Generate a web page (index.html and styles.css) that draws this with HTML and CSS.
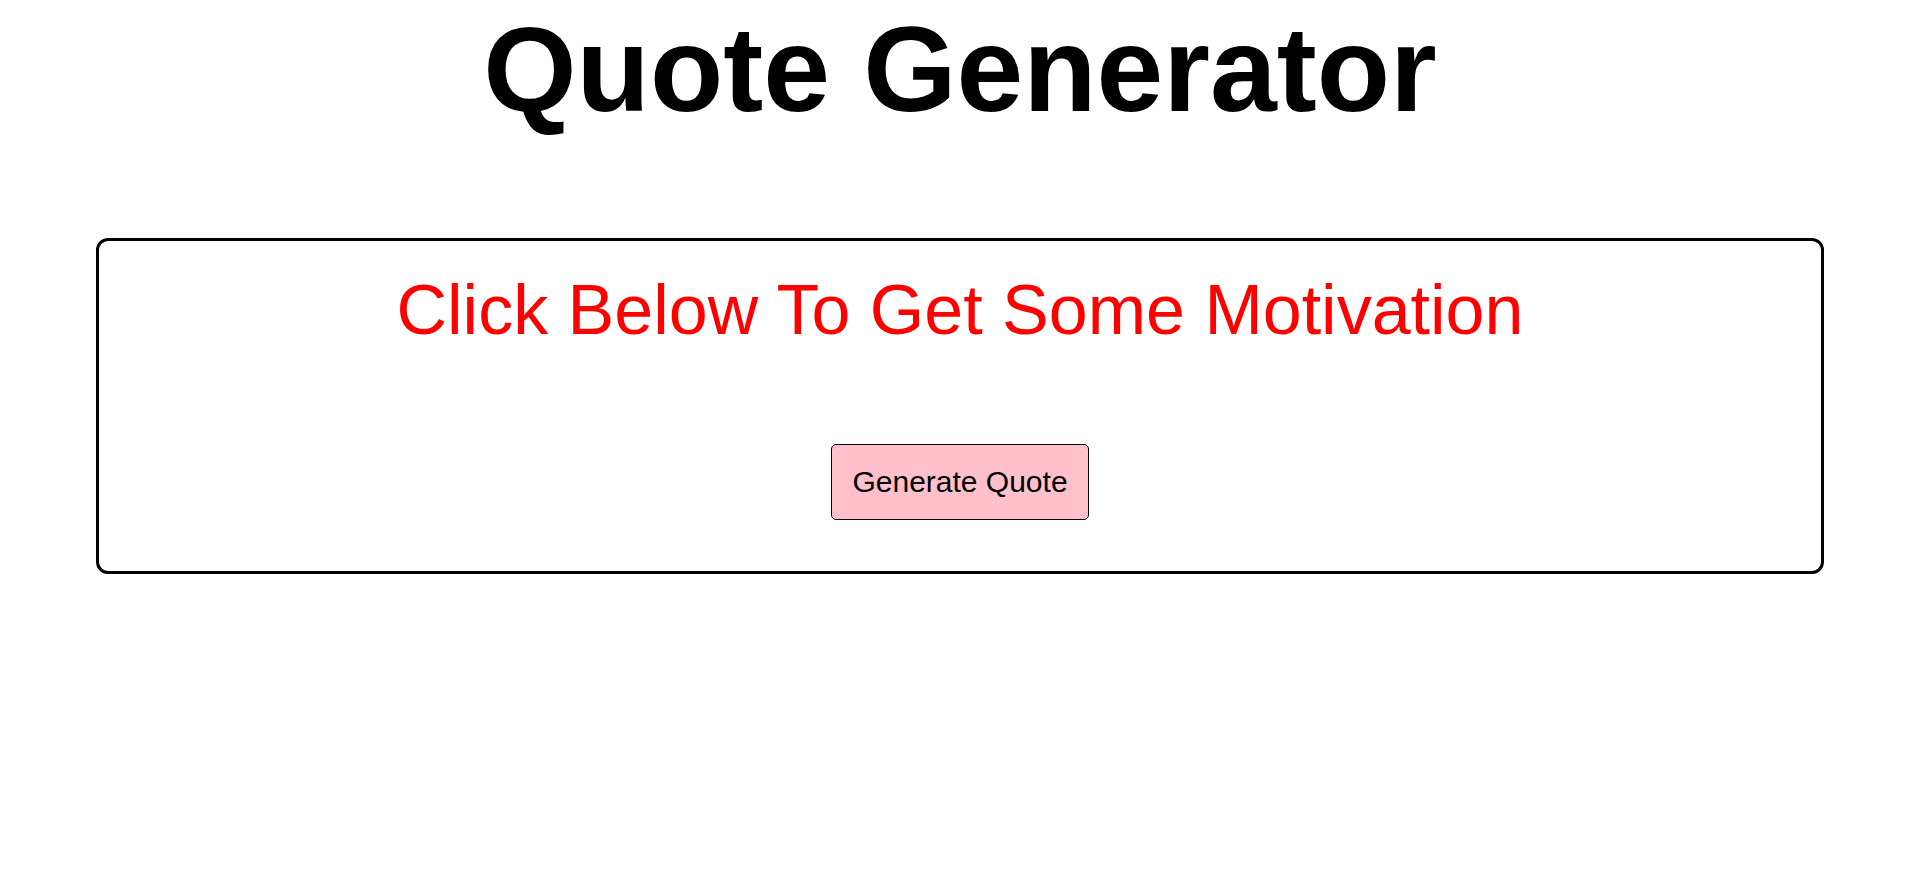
FILE: index.html
```html
<!DOCTYPE html>
<html lang="en">
<head>
<meta charset="utf-8">
<title>Quote Generator</title>
<link rel="stylesheet" href="styles.css">
</head>
<body>
  <h1 class="title">Quote Generator</h1>
  <div class="quote-box">
    <p class="quote-text">Click Below To Get Some Motivation</p>
    <button class="gen-btn" type="button">Generate Quote</button>
  </div>
</body>
</html>
```
FILE: styles.css
```css
html, body {
  margin: 0;
  padding: 0;
  background: #ffffff;
}

body {
  font-family: "Liberation Sans", Arial, sans-serif;
  color: #000;
}

.title {
  margin: 0 0 100px 0;
  font-size: 120px;
  font-weight: bold;
  line-height: normal;
  text-align: center;
}

.quote-box {
  box-sizing: border-box;
  width: 1728px;
  margin: 0 auto;
  height: 336px;
  border: 3px solid #000;
  border-radius: 12px;
  padding: 29px 20px 0;
  display: flex;
  flex-direction: column;
  align-items: center;
}

.quote-text {
  margin: 0;
  font-size: 70px;
  line-height: normal;
  color: #ff0000;
  text-align: center;
}

.gen-btn {
  margin-top: 94px;
  font-family: "Liberation Sans", Arial, sans-serif;
  font-size: 30px;
  line-height: normal;
  color: #000;
  background: #ffc0cb;
  border: 1px solid #000;
  border-radius: 5px;
  padding: 20px 20px;
  cursor: pointer;
}
```
